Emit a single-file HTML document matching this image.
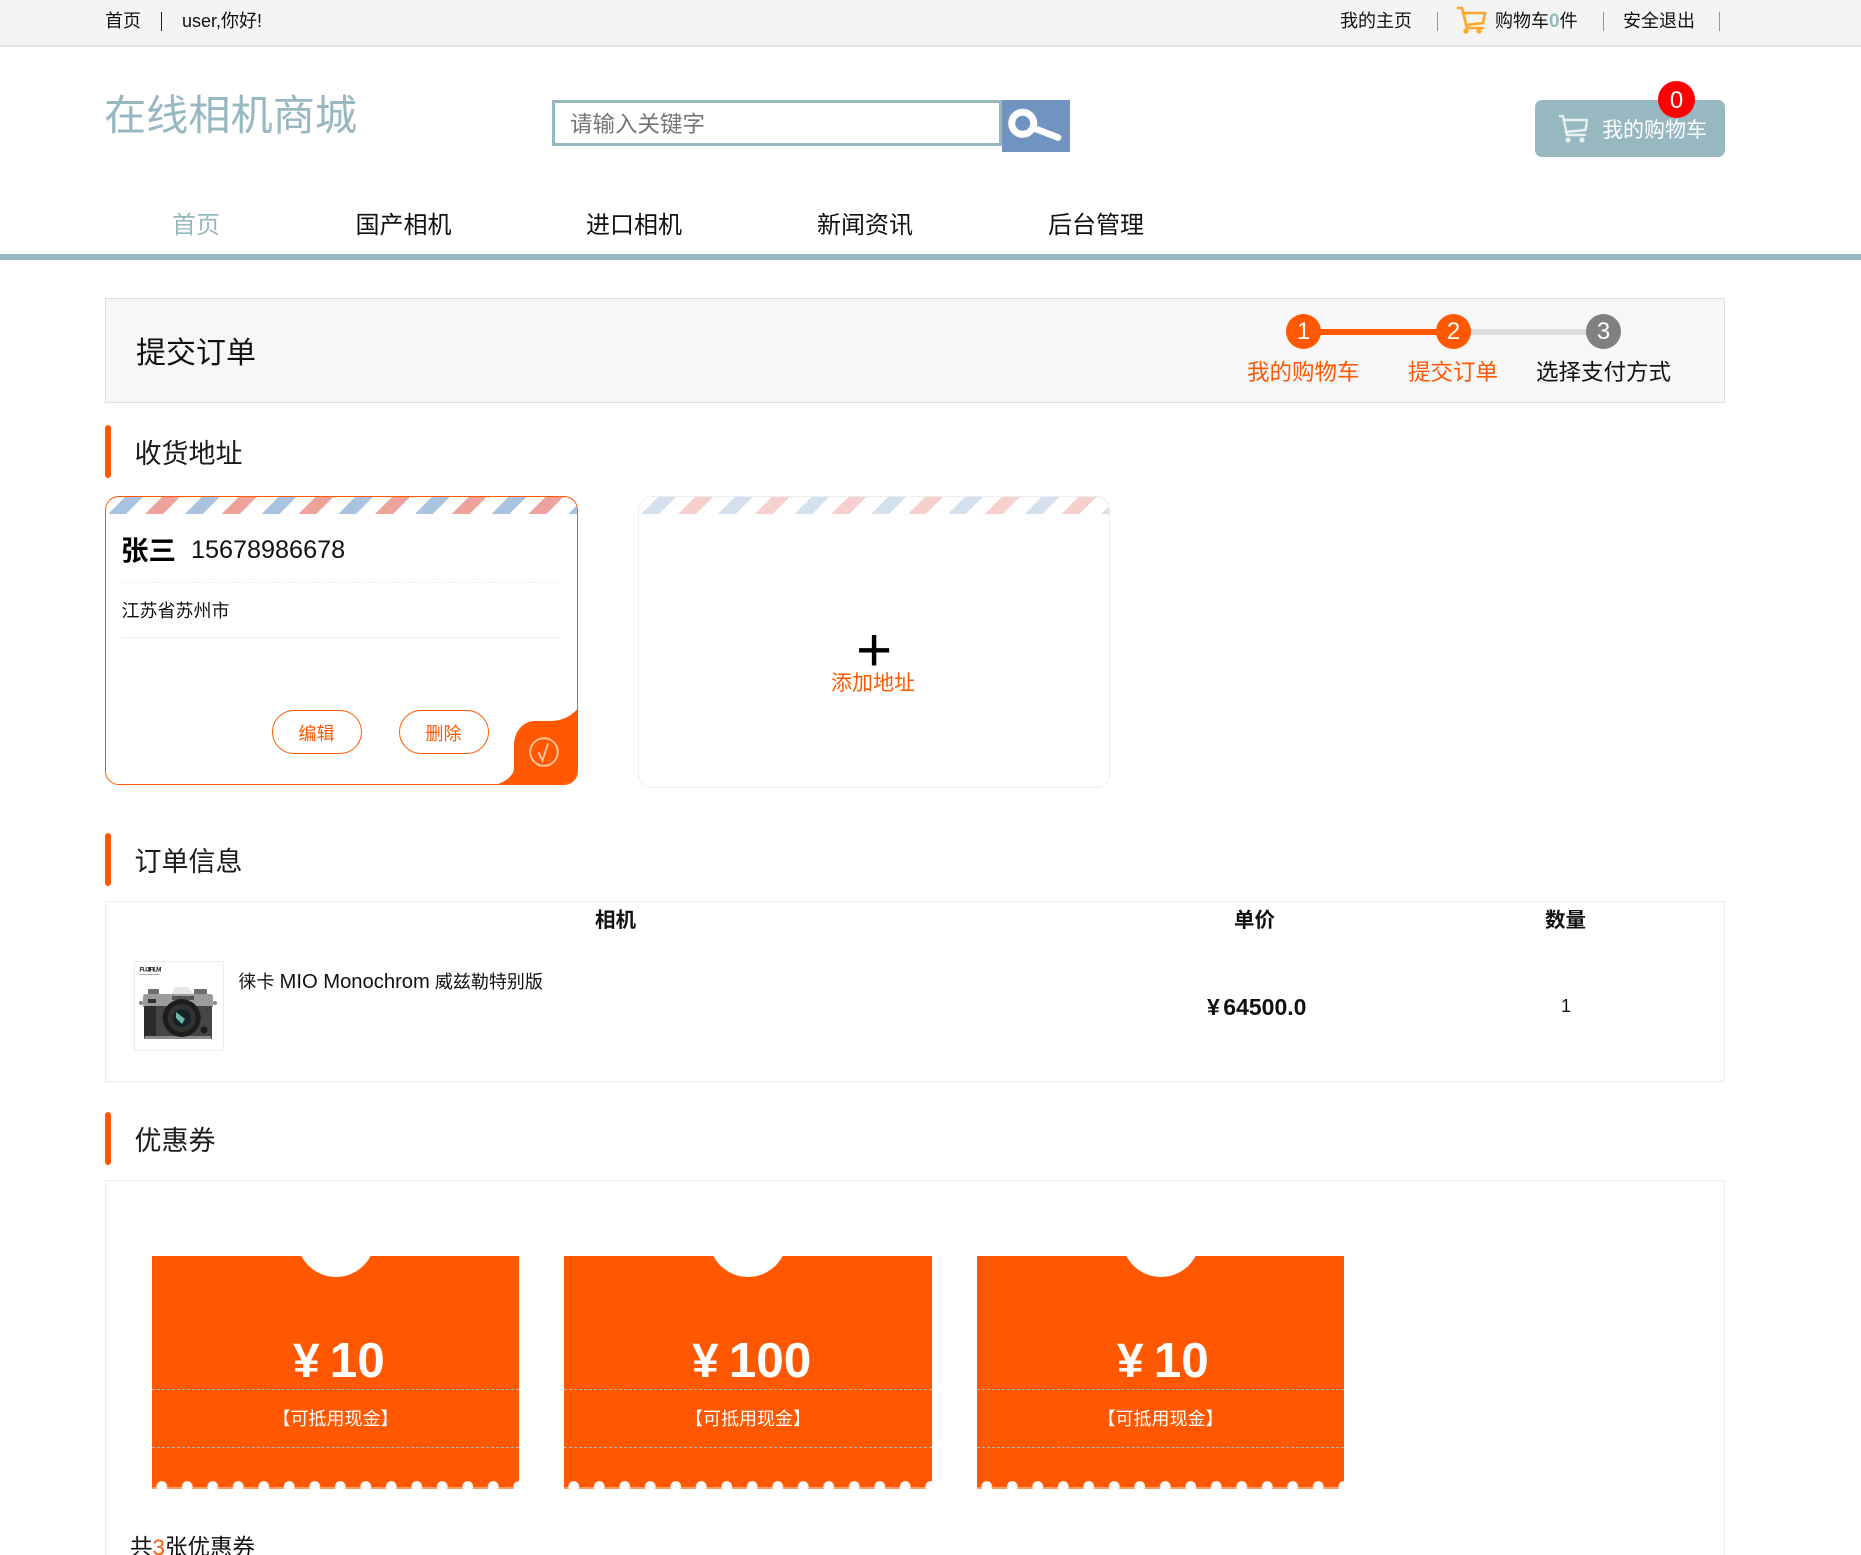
<!DOCTYPE html>
<html lang="zh-CN">
<head>
<meta charset="utf-8">
<title>提交订单</title>
<style>
html,body{margin:0;padding:0;background:#fff;width:1861px;height:1555px;overflow:hidden}
#p{position:relative;width:1861px;height:1555px;overflow:hidden;font-family:"Liberation Sans","Noto Sans CJK SC",sans-serif;color:#111;background:#fff}
.a{position:absolute}
.t{position:absolute;white-space:nowrap;line-height:1}
.o{color:#ff5800}
.bar{position:absolute;left:105px;width:6px;height:53px;background:#ff5800;border-radius:3px}
.sec{position:absolute;left:134.5px;font-size:27px;line-height:1;white-space:nowrap;color:#1a1a1a}
.sep{position:absolute;top:12px;width:1px;height:19px;background:#999}
.nav{position:absolute;top:214px;font-size:24px;line-height:1;white-space:nowrap;color:#111}
.c{position:absolute;top:314px;width:35px;height:35px;border-radius:50%;background:#ff5800;color:#fff;font-size:24px;line-height:35px;text-align:center}
.st{position:absolute;top:362px;font-size:22.5px;line-height:1;white-space:nowrap}
.card{position:absolute;top:496px;box-sizing:border-box;background:#fff;border-radius:14px;overflow:hidden}
.btn{position:absolute;top:710px;width:90px;height:44px;box-sizing:border-box;border:1px solid #ff5800;border-radius:22px;color:#ff5800;font-size:18px;line-height:46px;text-align:center;background:#fff}
.th{position:absolute;top:911px;font-size:20.5px;font-weight:bold;line-height:1;white-space:nowrap;color:#111}
.cp{position:absolute;top:1256px;width:367px;height:233px;background:#ff5800;overflow:hidden}
.cp .n{position:absolute;left:50%;top:-57px;width:78px;height:78px;margin-left:-39px;border-radius:50%;background:#fff}
.cp .d1,.cp .d2{position:absolute;left:0;right:0;border-top:1px dashed #9fb9bf}
.cp .d1{top:133px}.cp .d2{top:191px}
.cp .m{position:absolute;left:0;right:0;top:154px;text-align:center;font-size:18px;line-height:1;color:#fff;white-space:nowrap}
.cp .s{position:absolute;left:0;right:0;bottom:0;height:9px;background:radial-gradient(circle at 12.75px 6.5px,#fbf9f9 4.9px,rgba(255,255,255,0) 5.8px) -3px 0 repeat-x;background-size:25.5px 9px}
.cp .s2{position:absolute;left:0;right:0;bottom:0;height:2px;background:rgba(255,255,255,.4)}
.amt{position:absolute;top:1336px;font-size:49.5px;font-weight:bold;line-height:1;color:#fff;white-space:nowrap}
.amt i{font-style:normal;margin-right:10px;font-size:48px}
</style>
</head>
<body>
<div id="p">
<svg width="0" height="0" style="position:absolute">
<defs>
<pattern id="air" patternUnits="userSpaceOnUse" width="76.67" height="17">
<polygon points="3.3,17 21,17 38,0 20,0" fill="#a9c2dd"/>
<polygon points="40,17 58,17 75,0 57,0" fill="#eea29c"/>
<polygon points="-16.7,0 1.3,0 -15.7,17 -33,17" fill="#eea29c"/>
</pattern>
<filter id="bl" x="0" y="0" width="100%" height="100%"><feGaussianBlur stdDeviation=".35"/></filter>
</defs>
</svg>

<!-- top bar -->
<div class="a" style="left:0;top:0;width:1861px;height:47px;background:#f4f4f4;border-bottom:2px solid #e5e5e5;box-sizing:border-box"></div>
<div class="t" style="left:105px;top:12px;font-size:18px">首页</div>
<div class="sep" style="left:161px;background:#222"></div>
<div class="t" style="left:182px;top:12px;font-size:18px">user,你好!</div>
<div class="t" style="left:1340px;top:12px;font-size:18px">我的主页</div>
<div class="sep" style="left:1437px"></div>
<svg class="a" style="left:1450px;top:0" width="50" height="45" viewBox="0 0 50 45" fill="none" stroke="#ffa726" stroke-width="2.6" stroke-linecap="round" stroke-linejoin="round">
<path d="M8 8H12L17 28H33"/><path d="M13 13H35L33 23L16 25"/>
<circle cx="16" cy="31" r="2.6" fill="#ffa726" stroke="none"/><circle cx="29" cy="31" r="2.6" fill="#ffa726" stroke="none"/>
</svg>
<div class="t" style="left:1495px;top:12px;font-size:18px">购物车<span style="color:#98b8c1;font-weight:bold;font-size:19px">0</span>件</div>
<div class="sep" style="left:1603px"></div>
<div class="t" style="left:1623px;top:12px;font-size:18px">安全退出</div>
<div class="sep" style="left:1719px"></div>

<!-- header -->
<div class="t" style="left:104px;top:95px;font-size:42.2px;color:#98b8c1">在线相机商城</div>
<div class="a" style="left:552px;top:100px;width:450px;height:46px;box-sizing:border-box;border:3px solid #98b8c1;background:#fff"></div>
<div class="t" style="left:570px;top:114px;font-size:22.5px;color:#757575">请输入关键字</div>
<div class="a" style="left:1002px;top:100px;width:68px;height:52px;background:#7093bf"></div>
<svg class="a" style="left:1000px;top:95px" width="80" height="65" viewBox="0 0 80 65" fill="none" stroke="#fff" stroke-linecap="round">
<circle cx="22.7" cy="28.3" r="11" stroke-width="7"/><path d="M33.5 33L58 42.500" stroke-width="6.6"/>
</svg>
<div class="a" style="left:1535px;top:100px;width:190px;height:57px;background:#98b8c1;border-radius:7px"></div>
<svg class="a" style="left:1550px;top:108px" width="50" height="40" viewBox="0 0 50 40" fill="none" stroke="#fff" stroke-opacity=".78" stroke-width="2.4" stroke-linecap="round" stroke-linejoin="round">
<path d="M10 8H13L17 27H35"/><path d="M14 12H37L35.500 22L16 24"/>
<circle cx="18" cy="32" r="2.6" fill="#fff" fill-opacity=".78" stroke="none"/><circle cx="32" cy="32" r="2.6" fill="#fff" fill-opacity=".78" stroke="none"/>
</svg>
<div class="t" style="left:1602px;top:120px;font-size:21px;color:#fff">我的购物车</div>
<div class="a" style="left:1658px;top:81px;width:37px;height:37px;border-radius:50%;background:#f00;color:#fff;font-size:24px;line-height:39px;text-align:center">0</div>

<!-- nav -->
<div class="nav" style="left:172px;color:#98b8c1">首页</div>
<div class="nav" style="left:355.500px">国产相机</div>
<div class="nav" style="left:586px">进口相机</div>
<div class="nav" style="left:817px">新闻资讯</div>
<div class="nav" style="left:1048px">后台管理</div>
<div class="a" style="left:0;top:254px;width:1861px;height:6px;background:#98b8c1"></div>

<!-- steps panel -->
<div class="a" style="left:105px;top:298px;width:1620px;height:105px;box-sizing:border-box;background:#f7f7f7;border:1px solid #dedede"></div>
<div class="t" style="left:136px;top:339px;font-size:30px">提交订单</div>
<div class="a" style="left:1303px;top:329px;width:150px;height:6px;background:#ff5800"></div>
<div class="a" style="left:1453px;top:329px;width:150px;height:6px;background:#dcdcdc"></div>
<div class="c" style="left:1286px">1</div>
<div class="c" style="left:1436px">2</div>
<div class="c" style="left:1586px;background:#808080">3</div>
<div class="st o" style="left:1247px">我的购物车</div>
<div class="st o" style="left:1408px">提交订单</div>
<div class="st" style="left:1536px">选择支付方式</div>

<!-- address -->
<div class="bar" style="top:425px"></div>
<div class="sec" style="top:441px">收货地址</div>

<div class="card" style="left:105px;width:473px;height:289px;border:1px solid #ff5800">
<svg class="a" style="left:-1px;top:0" width="473" height="17"><rect width="473" height="17" fill="url(#air)"/></svg>
<svg class="a" style="left:-1px;top:-1px" width="473" height="289" viewBox="105 496 473 289"><path fill="#ff5800" d="M495 785C505 782 514 776 514 768L514 745C514 733 522 721 535 721L550 721C562 721 572 716 578 708L578 771Q578 785 564 785Z"/></svg>
</div>
<div class="t" style="left:121px;top:537px;font-size:27.5px;font-weight:bold;color:#000">张三</div>
<div class="t" style="left:191px;top:538px;font-size:25.2px">15678986678</div>
<div class="a" style="left:122px;top:582px;width:439px;border-top:1px dashed #eee"></div>
<div class="t" style="left:121.500px;top:602px;font-size:18px">江苏省苏州市</div>
<div class="a" style="left:122px;top:637px;width:439px;border-top:1px solid #eee"></div>
<div class="btn" style="left:271.500px">编辑</div>
<div class="btn" style="left:398.500px">删除</div>
<svg class="a" style="left:528px;top:736px" width="32" height="32" viewBox="0 0 32 32" fill="none" stroke="#fff" stroke-opacity=".62" stroke-width="2">
<circle cx="16" cy="16" r="13.800"/><path d="M10.500 16.500L14.500 24.500L20 7.500" stroke-width="2"/>
</svg>

<div class="card" style="left:638px;width:472px;height:292px;border:1px solid #eee">
<svg class="a" style="left:-1px;top:0;opacity:.5" width="472" height="17"><rect width="472" height="17" fill="url(#air)"/></svg>
</div>
<div class="t" style="left:856px;top:620px;font-size:62px;color:#000">+</div>
<div class="t o" style="left:831px;top:673px;font-size:21px">添加地址</div>

<!-- order -->
<div class="bar" style="top:833px"></div>
<div class="sec" style="top:849px">订单信息</div>
<div class="a" style="left:105px;top:901px;width:1620px;height:181px;box-sizing:border-box;border:1px solid #ececec"></div>
<div class="th" style="left:595px">相机</div>
<div class="th" style="left:1234px">单价</div>
<div class="th" style="left:1545px">数量</div>
<svg class="a" style="left:134px;top:961px" width="90" height="90" viewBox="0 0 90 90">
<rect x=".5" y=".5" width="89" height="89" fill="#fff" stroke="#ececec"/>
<g filter="url(#bl)">
<text x="5.5" y="10.5" font-family="Liberation Sans" font-size="6.4" font-weight="bold" fill="#222" textLength="22">FUJIFILM</text>
<rect x="5.5" y="13" width="20" height="1" fill="#aaa"/>
<path d="M37 34L41 26H54L62 35Z" fill="#e6e6e6"/>
<rect x="14" y="28" width="11" height="6" rx="1" fill="#6e6e6e"/>
<rect x="60" y="28" width="13" height="6" rx="1" fill="#6e6e6e"/>
<path d="M9 36Q9 33 12 33H76Q79 33 79 36V46H9Z" fill="#9c9c9c"/>
<rect x="14" y="38" width="8" height="4" fill="#333"/>
<rect x="38" y="35" width="22" height="4" fill="#555"/>
<rect x="10" y="45" width="68" height="33" rx="1" fill="#444"/>
<rect x="10" y="45" width="12" height="31" rx="2" fill="#2a2a2a"/>
<rect x="11" y="75" width="66" height="3" fill="#8a8a8a"/>
<circle cx="7" cy="42" r="2" fill="#888"/><circle cx="81" cy="42" r="2" fill="#888"/>
<circle cx="47.7" cy="57" r="19" fill="#1e1e1e"/>
<circle cx="47.7" cy="57" r="14" fill="#333"/>
<circle cx="47.7" cy="57" r="9" fill="#15242a"/>
<path d="M42 51L51 58L48 63L42 57Z" fill="#6fb8a6"/>
<circle cx="70" cy="69" r="3.5" fill="#1c1c1c"/>
</g>
</svg>
<div class="t" style="left:238.500px;top:972px;font-size:18px">徕卡 <span style="font-size:20.2px">MIO Monochrom</span> 威兹勒特别版</div>
<div class="t" style="left:1207px;top:996px;font-size:23px;font-weight:bold">¥<span style="margin-left:3.500px">64500.0</span></div>
<div class="t" style="left:1561px;top:997px;font-size:18px">1</div>

<!-- coupons -->
<div class="bar" style="top:1112px"></div>
<div class="sec" style="top:1128px">优惠券</div>
<div class="a" style="left:105px;top:1180px;width:1620px;height:420px;box-sizing:border-box;border:1px solid #ececec"></div>

<div class="cp" style="left:152px"><div class="n"></div><div class="d1"></div><div class="d2"></div><div class="m">【可抵用现金】</div><div class="s"></div><div class="s2"></div></div>
<div class="cp" style="left:564px;width:368px"><div class="n"></div><div class="d1"></div><div class="d2"></div><div class="m">【可抵用现金】</div><div class="s"></div><div class="s2"></div></div>
<div class="cp" style="left:977px"><div class="n"></div><div class="d1"></div><div class="d2"></div><div class="m">【可抵用现金】</div><div class="s"></div><div class="s2"></div></div>
<div class="amt" style="left:293px"><i>¥</i>10</div>
<div class="amt" style="left:692px"><i>¥</i>100</div>
<div class="amt" style="left:1117px"><i>¥</i>10</div>

<div class="t" style="left:130px;top:1537px;font-size:22.5px">共<span class="o">3</span>张优惠券</div>
</div>
</body>
</html>
